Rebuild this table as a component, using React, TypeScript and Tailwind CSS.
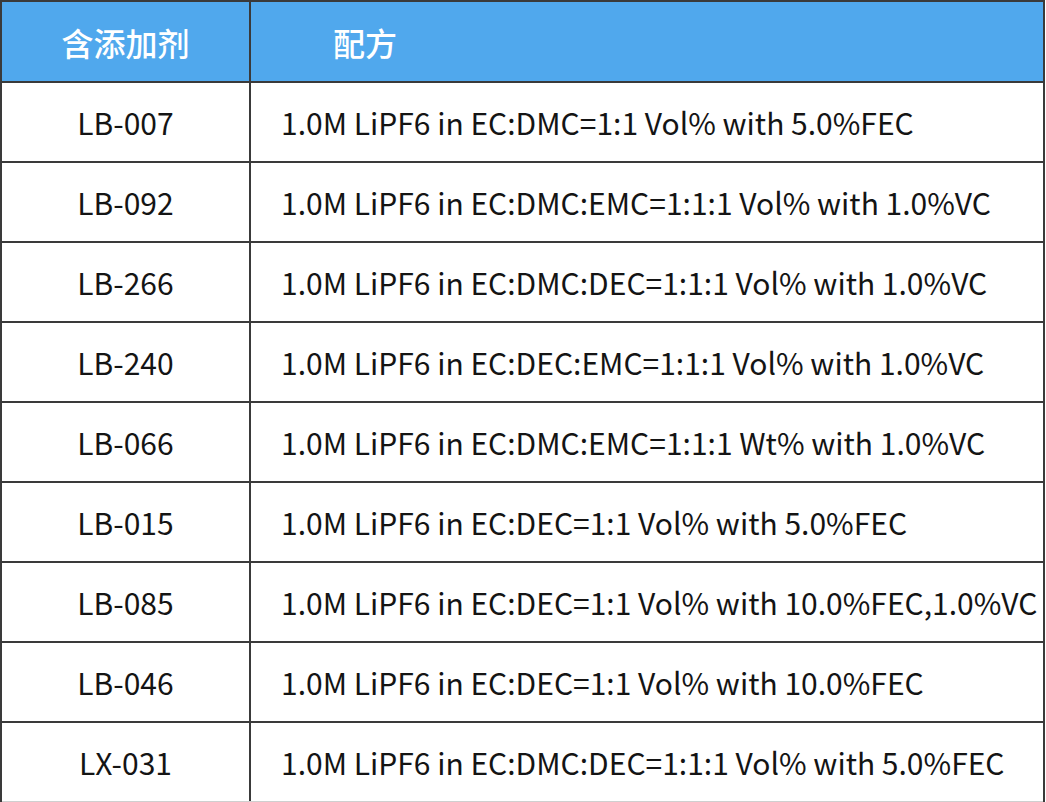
import React from 'react';

const ROWS = [
    { id: 'LB-007', recipe: '1.0M LiPF6 in EC:DMC=1:1 Vol% with 5.0%FEC' },
    { id: 'LB-092', recipe: '1.0M LiPF6 in EC:DMC:EMC=1:1:1 Vol% with 1.0%VC' },
    { id: 'LB-266', recipe: '1.0M LiPF6 in EC:DMC:DEC=1:1:1 Vol% with 1.0%VC' },
    { id: 'LB-240', recipe: '1.0M LiPF6 in EC:DEC:EMC=1:1:1 Vol% with 1.0%VC' },
    { id: 'LB-066', recipe: '1.0M LiPF6 in EC:DMC:EMC=1:1:1 Wt% with 1.0%VC' },
    { id: 'LB-015', recipe: '1.0M LiPF6 in EC:DEC=1:1 Vol% with 5.0%FEC' },
    { id: 'LB-085', recipe: '1.0M LiPF6 in EC:DEC=1:1 Vol% with 10.0%FEC,1.0%VC' },
    { id: 'LB-046', recipe: '1.0M LiPF6 in EC:DEC=1:1 Vol% with 10.0%FEC' },
    { id: 'LX-031', recipe: '1.0M LiPF6 in EC:DMC:DEC=1:1:1 Vol% with 5.0%FEC' },
];

export default function App() {
    return (
        <div className="w-[1046px] h-[802px] bg-white overflow-hidden font-['Noto_Sans_CJK_SC','Noto_Sans',sans-serif]">
            <div className="w-[1045px] border-l-2 border-r-2 border-[#3a3a3a]">
                {/* Header */}
                <div className="flex h-[83px] bg-[#50a8ed] border-t-2 border-b-2 border-[#3a3a3a] text-white text-[32px] font-medium">
                    <div className="w-[249px] flex items-center justify-center border-r-2 border-[#3a3a3a]">
                        含添加剂
                    </div>
                    <div className="flex-1 flex items-center pl-[82px]">配方</div>
                </div>

                {/* Rows */}
                {ROWS.map((row, index) => (
                    <div
                        key={row.id}
                        className={
                            index === ROWS.length - 1
                                ? 'flex h-[80px] border-b-2 border-[#cfcfcf] text-[#141414] text-[30px]'
                                : 'flex h-[80px] border-b-2 border-[#3a3a3a] text-[#141414] text-[30px]'
                        }
                    >
                        <div className="w-[249px] flex items-center justify-center border-r-2 border-[#3a3a3a]">
                            {row.id}
                        </div>
                        <div className="flex-1 flex items-center pl-[30px] whitespace-nowrap">{row.recipe}</div>
                    </div>
                ))}
            </div>
        </div>
    );
}
